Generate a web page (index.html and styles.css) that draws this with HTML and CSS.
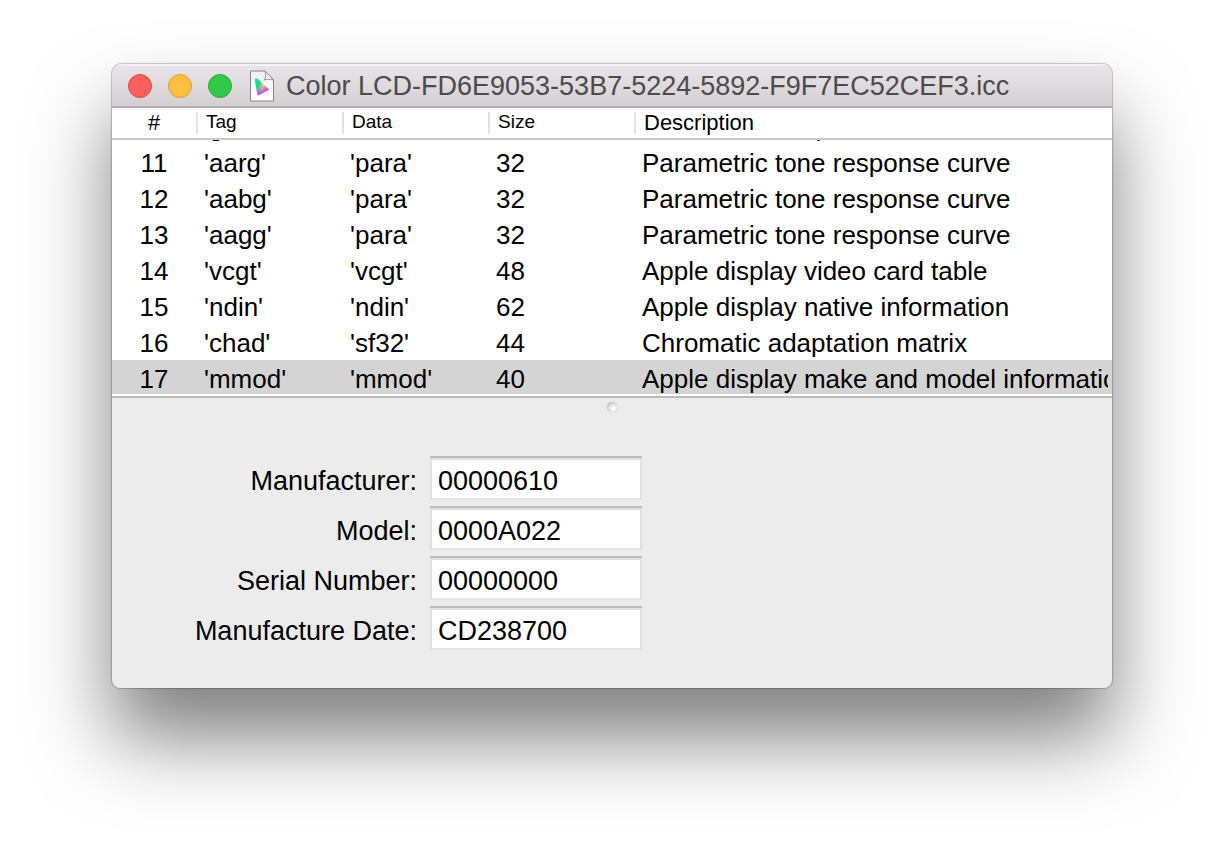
FILE: index.html
```html
<!DOCTYPE html>
<html lang="en">
<head>
  <meta charset="UTF-8">
  <meta name="viewport" content="width=device-width, initial-scale=1.0">
  <title>Color LCD-FD6E9053-53B7-5224-5892-F9F7EC52CEF3.icc</title>
  <link rel="stylesheet" href="styles.css">
</head>
<body>
  <main class="window">
    <!-- Title Bar -->
    <header class="titlebar">
      <div class="controls">
        <button class="control close" type="button" aria-label="Close"></button>
        <button class="control minimize" type="button" aria-label="Minimize"></button>
        <button class="control zoom" type="button" aria-label="Zoom"></button>
      </div>
      <svg class="file-icon" width="26" height="32" viewBox="0 0 26 32" aria-hidden="true">
        <defs>
          <linearGradient id="paper" x1="0" y1="0" x2="0" y2="1">
            <stop offset="0" stop-color="#f0f0f0"/>
            <stop offset="1" stop-color="#ffffff"/>
          </linearGradient>
          <linearGradient id="gamut" x1="0" y1="0.2" x2="1" y2="0.6">
            <stop offset="0" stop-color="#00e0d8"/>
            <stop offset="0.3" stop-color="#20dc78"/>
            <stop offset="0.6" stop-color="#e8d888"/>
            <stop offset="1" stop-color="#ff3060"/>
          </linearGradient>
          <linearGradient id="violet" x1="0.4" y1="0.45" x2="0.55" y2="1">
            <stop offset="0" stop-color="#a060ff" stop-opacity="0"/>
            <stop offset="0.6" stop-color="#c848ff" stop-opacity="0.8"/>
            <stop offset="1" stop-color="#7828ff"/>
          </linearGradient>
        </defs>
        <path d="M1.5 1H16L24.500 9.500V31H1.500Z" fill="url(#paper)" stroke="#858585"/>
        <path d="M16 1C17 4 17 7 15.500 10C18 8.800 21.500 9 24.500 10Z" fill="#fff" stroke="#8e8e8e"/>
        <path d="M6 10C5.500 8 8 8 9.500 9.500L20 19.500L9 25.500C7.500 21 6.500 15 6 10Z" fill="url(#gamut)"/>
        <path d="M6 10C5.500 8 8 8 9.500 9.500L20 19.500L9 25.500C7.500 21 6.500 15 6 10Z" fill="url(#violet)"/>
      </svg>
      <h1 class="title">Color LCD-FD6E9053-53B7-5224-5892-F9F7EC52CEF3.icc</h1>
    </header>

    <!-- Tag List -->
    <table class="tags">
      <thead>
        <tr>
          <th class="large" scope="col">#</th>
          <th scope="col">Tag</th>
          <th scope="col">Data</th>
          <th scope="col">Size</th>
          <th class="large" scope="col">Description</th>
        </tr>
      </thead>
      <tbody>
        <tr><td>10</td><td>'gTRC'</td><td>'curv'</td><td>32</td><td>Green tone response curve</td></tr>
        <tr><td>11</td><td>'aarg'</td><td>'para'</td><td>32</td><td>Parametric tone response curve</td></tr>
        <tr><td>12</td><td>'aabg'</td><td>'para'</td><td>32</td><td>Parametric tone response curve</td></tr>
        <tr><td>13</td><td>'aagg'</td><td>'para'</td><td>32</td><td>Parametric tone response curve</td></tr>
        <tr><td>14</td><td>'vcgt'</td><td>'vcgt'</td><td>48</td><td>Apple display video card table</td></tr>
        <tr><td>15</td><td>'ndin'</td><td>'ndin'</td><td>62</td><td>Apple display native information</td></tr>
        <tr><td>16</td><td>'chad'</td><td>'sf32'</td><td>44</td><td>Chromatic adaptation matrix</td></tr>
        <tr class="selected"><td>17</td><td>'mmod'</td><td>'mmod'</td><td>40</td><td>Apple display make and model information</td></tr>
      </tbody>
    </table>

    <div class="splitter"><span class="dimple"></span></div>

    <!-- Tag Details -->
    <form class="details">
      <label for="manufacturer">Manufacturer:</label>
      <input type="text" id="manufacturer" value="00000610">
      <label for="model">Model:</label>
      <input type="text" id="model" value="0000A022">
      <label for="serial">Serial Number:</label>
      <input type="text" id="serial" value="00000000">
      <label for="date">Manufacture Date:</label>
      <input type="text" id="date" value="CD238700">
    </form>
  </main>
</body>
</html>
```
FILE: styles.css
```css
/* General Styling */
* {
  box-sizing: border-box;
}

body {
  margin: 0;
  padding: 64px 112px 160px;
  font-family: "Liberation Sans", Arial, sans-serif;
  color: #000;
  background: #fff;
  overflow: hidden;
}

.window {
  overflow: hidden;
  background: #ececec;
  border-radius: 10px 10px 8px 8px;
  box-shadow: 0 0 1px 1px rgba(0, 0, 0, 0.22), 0 50px 80px rgba(0, 0, 0, 0.5);
}

/* Title Bar */
.titlebar {
  display: flex;
  align-items: center;
  height: 44px;
  padding: 2px 16px 0;
  background: linear-gradient(#e9e5e9, #d3cfd3);
  border-bottom: 2px solid #b1adb1;
  box-shadow: inset 0 2px 0 #f3f1f3;
}

.controls {
  display: flex;
  gap: 16px;
  margin-right: 17px;
}

.control {
  width: 24px;
  height: 24px;
  padding: 0;
  border: 1px solid;
  border-radius: 50%;
}

.close {
  background: #fc605c;
  border-color: #df4744;
}

.minimize {
  background: #fdbe41;
  border-color: #de9f34;
}

.zoom {
  background: #34c84a;
  border-color: #27a934;
}

.file-icon {
  flex: none;
  margin-right: 11px;
}

.title {
  margin: 0;
  font-size: 27px;
  font-weight: normal;
  line-height: 34px;
  color: #4d4a4d;
  white-space: nowrap;
}

/* Tag List */
.tags,
.tags thead {
  display: block;
  background: #fff;
}

.tags thead {
  border-bottom: 2px solid #c9c9c9;
}

/* Scrolled to the end, so the first row sits under the header */
.tags tbody {
  display: flex;
  flex-direction: column;
  justify-content: flex-end;
  height: 256px;
  overflow: hidden;
}

.tags tr {
  display: grid;
  grid-template-columns: 84px 146px 146px 146px 1fr;
  flex: none;
}

.tags th {
  height: 22px;
  margin: 4px 0;
  padding: 0 0 0 8px;
  border-left: 2px solid #e2e2e2;
  font-size: 19px;
  font-weight: normal;
  line-height: 20px;
  text-align: left;
}

.tags th:first-child {
  padding: 0;
  border-left: none;
  text-align: center;
}

.tags .large {
  font-size: 22px;
  line-height: 22px;
}

.tags td {
  padding: 0 0 0 8px;
  font-size: 26px;
  line-height: 38px;
  white-space: nowrap;
  overflow: hidden;
}

.tags td:first-child {
  padding: 0;
  text-align: center;
}

.tags td:last-child {
  margin-right: 4px;
}

.tags tbody tr {
  height: 36px;
  border-bottom: 2px solid #fff;
}

.tags .selected {
  background: #d4d4d4;
}

/* Splitter */
.splitter {
  display: flex;
  justify-content: center;
  height: 20px;
  padding-top: 4px;
  border-top: 2px solid #bbb;
}

.dimple {
  width: 10px;
  height: 10px;
  border-radius: 50%;
  background: radial-gradient(circle at 65% 65%, #fafafa 15%, #d4d4d4 60%, #a0a0a0);
  box-shadow: 0 0 1px #aaa;
}

/* Tag Details */
.details {
  display: grid;
  grid-template-columns: 305px 212px;
  gap: 6px 13px;
  padding: 40px 0 38px;
  font-size: 27px;
}

.details label {
  height: 44px;
  line-height: 50px;
  text-align: right;
}

.details input {
  height: 44px;
  padding: 6px 8px 0;
  border: none;
  border-radius: 0;
  background: #fff;
  box-shadow:
    inset 0 2px 0 #bcbcbc,
    inset 0 4px 0 #e0e0e0,
    inset 2px 0 0 #e0e0e0,
    inset -2px 0 0 #e0e0e0,
    inset 0 -2px 0 #e6e6e6;
  font: inherit;
  color: #000;
  outline: none;
}
```
